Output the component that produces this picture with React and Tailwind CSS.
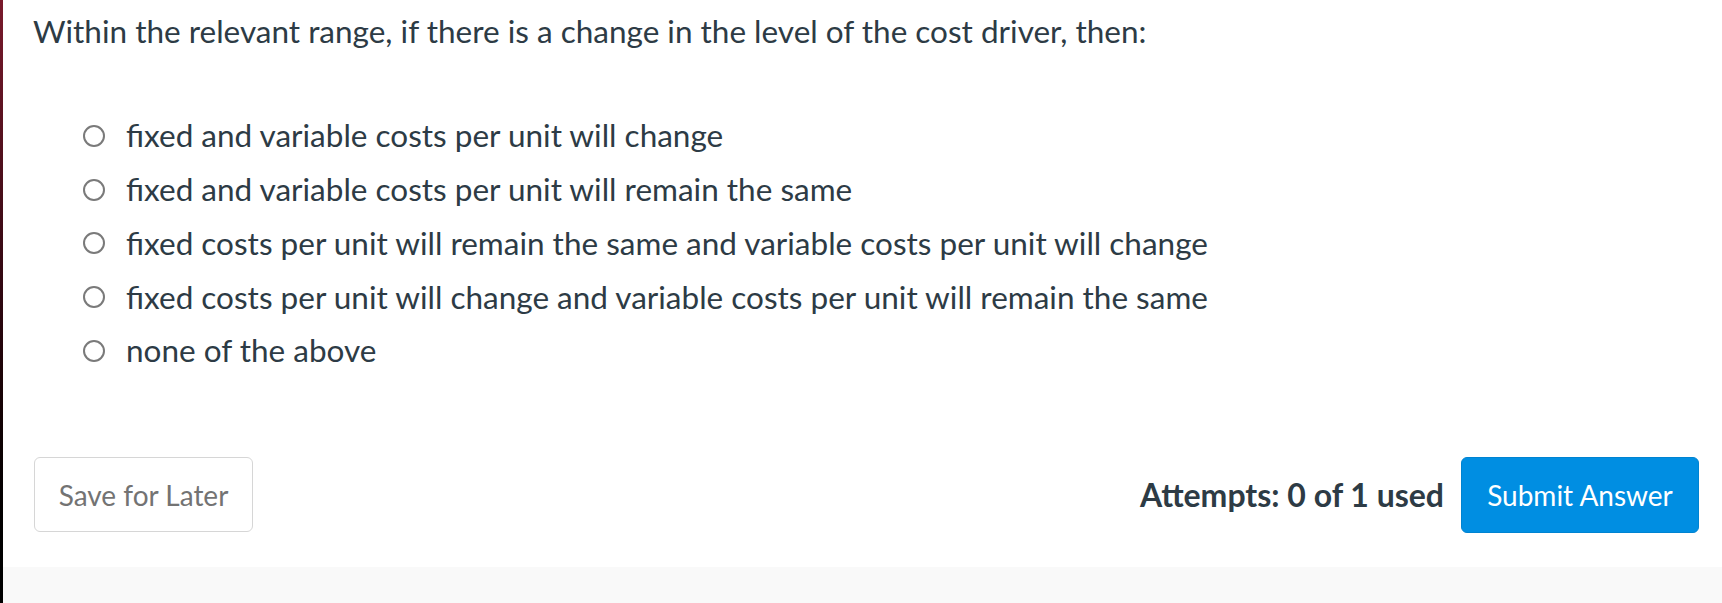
import React from "react";

const OPTIONS = [
  "fixed and variable costs per unit will change",
  "fixed and variable costs per unit will remain the same",
  "fixed costs per unit will remain the same and variable costs per unit will change",
  "fixed costs per unit will change and variable costs per unit will remain the same",
  "none of the above",
];

export default function App() {
  return (
    <div
      className="flex h-[603px] w-[1722px] overflow-hidden bg-white text-[#2d3b45]"
      style={{ fontFamily: "Lato, 'Liberation Sans', sans-serif" }}
    >
      {/* window edge */}
      <div className="w-[3px] shrink-0 bg-gradient-to-b from-[#7a1a2c] via-[#2e0710] to-black" />

      <div className="flex flex-1 flex-col">
        <div className="flex-1 pl-[30px] pr-[23px] pt-[11px]">
          <p className="text-[31.5px] leading-[40px]">
            Within the relevant range, if there is a change in the level of the cost driver, then:
          </p>

          <div className="mt-[58px] pl-[50px]">
            {OPTIONS.map((opt) => (
              <label key={opt} className="flex h-[53.75px] items-center gap-[21px] text-[31.5px]">
                <span className="block h-[22px] w-[22px] shrink-0 rounded-full border-2 border-[#7a7a7a] bg-white" />
                <span>{opt}</span>
              </label>
            ))}
          </div>

          <div className="mt-[79px] flex items-center">
            <button className="ml-px h-[75px] w-[219px] rounded-[6px] border border-[#d6d6d6] bg-white text-[28px] text-[#737373]">
              Save for Later
            </button>
            <div className="ml-auto flex items-center gap-[17px]">
              <span className="text-[32px] font-bold">Attempts: 0 of 1 used</span>
              <button className="h-[76px] w-[238px] rounded-[6px] border border-[#0083d1] bg-[#008ee2] text-[28px] text-white">
                Submit Answer
              </button>
            </div>
          </div>
        </div>
        <div className="h-[36px] bg-[#f9f9f9]" />
      </div>
    </div>
  );
}
